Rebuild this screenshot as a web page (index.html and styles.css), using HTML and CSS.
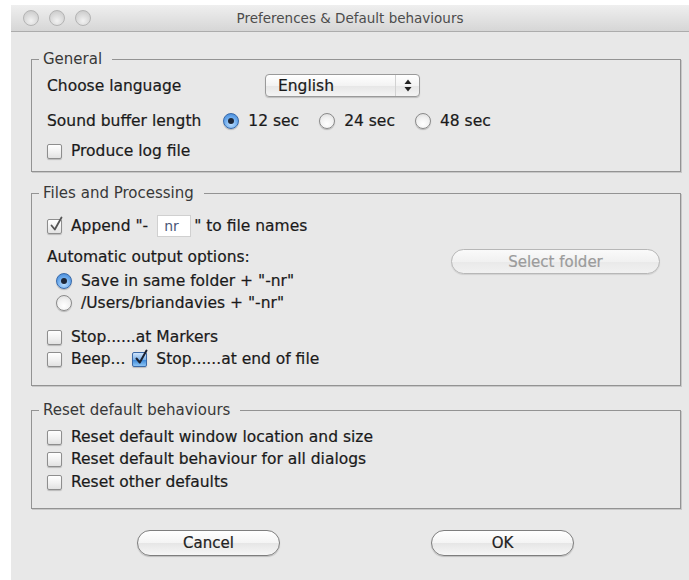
FILE: index.html
```html
<!DOCTYPE html>
<html lang="en">
<head>
<meta charset="utf-8">
<title>Preferences &amp; Default behaviours</title>
<link rel="stylesheet" href="styles.css">
</head>
<body>
<div class="window">
  <div class="titlebar">
    <div class="lights"><span></span><span></span><span></span></div>
    <div class="title">Preferences &amp; Default behaviours</div>
  </div>

  <div class="content">
    <fieldset class="group group-general">
      <legend>General</legend>
      <div class="row row-lang">
        <span class="label label-lang">Choose language</span>
        <div class="popup">
          <span class="popup-value">English</span>
          <span class="popup-arrows">
            <svg width="8" height="13" viewBox="0 0 8 13"><path d="M4 0.5 L7.5 5 L0.5 5 Z" fill="#222"/><path d="M4 12.5 L7.5 8 L0.5 8 Z" fill="#222"/></svg>
          </span>
        </div>
      </div>
      <div class="row row-buffer">
        <span class="label label-buffer">Sound buffer length</span>
        <div class="radio-group">
          <span class="opt"><span class="radio on"></span>12 sec</span>
          <span class="opt"><span class="radio"></span>24 sec</span>
          <span class="opt"><span class="radio"></span>48 sec</span>
        </div>
      </div>
      <div class="row row-log">
        <span class="opt"><span class="check"></span>Produce log file</span>
      </div>
    </fieldset>

    <fieldset class="group group-files">
      <legend>Files and Processing</legend>
      <div class="row row-append">
        <span class="opt">
          <span class="check marked">
            <svg class="tick" width="16" height="18" viewBox="0 0 16 18"><path d="M3.5 10.5 L6.8 14.5 L13.5 2.5" fill="none" stroke="#555" stroke-width="1.8" stroke-linecap="round" stroke-linejoin="round"/></svg>
          </span>Append "-</span>
        <span class="field">nr</span>
        <span class="after-field">" to file names</span>
      </div>
      <div class="auto-block">
        <div class="auto-options">
          <div class="row row-auto">Automatic output options:</div>
          <div class="row row-radio first"><span class="opt"><span class="radio on"></span>Save in same folder + "-nr"</span></div>
          <div class="row row-radio"><span class="opt"><span class="radio"></span>/Users/briandavies + "-nr"</span></div>
        </div>
        <div class="pill pill-disabled select-folder">Select folder</div>
      </div>
      <div class="row row-markers">
        <span class="opt"><span class="check"></span>Stop......at Markers</span>
      </div>
      <div class="row row-beep">
        <span class="opt"><span class="check"></span>Beep...</span>
        <span class="opt"><span class="check blue">
          <svg class="tick" width="16" height="18" viewBox="0 0 16 18"><path d="M3.5 10.5 L6.8 14.5 L13.5 2.5" fill="none" stroke="#1b2130" stroke-width="2" stroke-linecap="round" stroke-linejoin="round"/></svg>
        </span>Stop......at end of file</span>
      </div>
    </fieldset>

    <fieldset class="group group-reset">
      <legend>Reset default behaviours</legend>
      <div class="row row-reset first"><span class="opt"><span class="check"></span>Reset default window location and size</span></div>
      <div class="row row-reset"><span class="opt"><span class="check"></span>Reset default behaviour for all dialogs</span></div>
      <div class="row row-reset"><span class="opt"><span class="check"></span>Reset other defaults</span></div>
    </fieldset>

    <div class="buttons">
      <div class="pill">Cancel</div>
      <div class="pill">OK</div>
    </div>
  </div>
</div>
</body>
</html>
```

FILE: styles.css
```css
html, body {
  margin: 0;
  padding: 0;
  background: #ffffff;
}

body {
  font-family: "DejaVu Sans", "Liberation Sans", sans-serif;
  font-size: 15.5px;
  color: #1a1a1a;
  -webkit-text-stroke: 0.2px currentColor;
}

/* ---------- window chrome ---------- */
.window {
  margin: 5px 0 0 11px;
  width: 678px;
  height: 575px;
  background: #e8e8e8;
  display: flex;
  flex-direction: column;
}

.titlebar {
  height: 26px;
  border-bottom: 1px solid #acacac;
  background: linear-gradient(#efefef, #d6d6d6);
  display: grid;
  grid-template-columns: 1fr auto 1fr;
  align-items: center;
}

.lights {
  display: flex;
  gap: 10px;
  padding-left: 12px;
}

.lights span {
  width: 14px;
  height: 14px;
  border-radius: 50%;
  border: 1px solid #b4b4b4;
  background: radial-gradient(circle at 50% 70%, #f2f2f2, #d2d2d2 70%, #c4c4c4);
}

.title {
  font-size: 13.5px;
  color: #4c4c4c;
  white-space: nowrap;
  -webkit-text-stroke: 0;
}

/* ---------- body ---------- */
.content {
  padding: 0 8px 0 20px;
  display: flex;
  flex-direction: column;
}

.group {
  margin: 0;
  padding: 0 10px 0 15px;
  border: 1px solid #939393;
  box-shadow: 1px 1px 0 #c8c8c8;
  min-width: 0;
}

.group legend {
  font-size: 15px;
  line-height: 18px;
  color: #383838;
  padding: 0 10px 0 4px;
  margin-left: -8px;
  -webkit-text-stroke: 0;
}

.group-general { margin-top: 18px; padding-top: 6px; padding-bottom: 10px; }
.group-files   { margin-top: 12px; padding-top: 13px; padding-bottom: 16px; }
.group-reset   { margin-top: 15px; padding-top: 8px;  padding-bottom: 16px; }

.row {
  display: flex;
  align-items: center;
  height: 20px;
  white-space: nowrap;
}

.opt {
  display: inline-flex;
  align-items: center;
  gap: 9px;
}

/* general */
.row-lang { height: 23px; }
.label-lang { width: 218px; }
.row-buffer { margin-top: 14px; }
.label-buffer { margin-right: 22px; }
.radio-group { display: flex; gap: 20px; }
.row-log { margin-top: 10px; }

.popup {
  width: 153px;
  height: 21px;
  border: 1px solid #9a9a9a;
  border-radius: 4px;
  background: linear-gradient(#ffffff, #f3f3f3 50%, #e6e6e6 51%, #f4f4f4);
  box-shadow: 0 1px 1px rgba(0, 0, 0, 0.18);
  display: flex;
  align-items: center;
}

.popup-value {
  flex: 1;
  padding-left: 12px;
}

.popup-arrows {
  width: 23px;
  height: 100%;
  border-left: 1px solid #d2d2d2;
  display: flex;
  align-items: center;
  justify-content: center;
}

/* files */
.row-append { height: 22px; }
.field {
  width: 26px;
  height: 20px;
  margin-left: 9px;
  padding-left: 6px;
  background: #ffffff;
  border: 1px solid #d0d0d0;
  color: #4a5878;
  font-size: 14px;
  line-height: 20px;
  -webkit-text-stroke: 0;
}
.after-field { margin-left: 3px; }

.auto-block {
  display: grid;
  grid-template-columns: 404px 209px;
  margin-top: 10px;
}

.row-radio { padding-left: 9px; }
.row-radio.first { margin-top: 4px; }
.row-radio + .row-radio { margin-top: 2px; }

.row-markers { margin-top: 14px; }
.row-beep { margin-top: 2px; gap: 7px; }

/* reset */
.row-reset + .row-reset { margin-top: 2px; }
.row-reset:last-child { margin-top: 3px; }

/* ---------- controls ---------- */
.check {
  position: relative;
  width: 13px;
  height: 13px;
  border: 1px solid #8e8e8e;
  border-radius: 2px;
  background: linear-gradient(#ffffff, #f1f1f1 55%, #e2e2e2);
  box-shadow: 0 1px 1px rgba(0, 0, 0, 0.2);
  flex: none;
}

.check.blue {
  border-color: #3a68a6;
  background: linear-gradient(#cfe4fb, #7fb3ea 50%, #3f8ad9 55%, #8cc4f4);
}

.tick {
  position: absolute;
  left: 0;
  top: -5px;
}

.radio {
  position: relative;
  width: 14px;
  height: 14px;
  border: 1px solid #8a8a8a;
  border-radius: 50%;
  background: radial-gradient(circle at 50% 70%, #ffffff, #f0f0f0 55%, #d6d6d6);
  box-shadow: 0 1px 1px rgba(0, 0, 0, 0.22);
  flex: none;
}

.radio.on {
  border-color: #3769aa;
  background: radial-gradient(circle at 50% 70%, #bfe0ff, #6aa9ec 55%, #3a7fd2);
}

.radio.on::after {
  content: "";
  position: absolute;
  left: 4px;
  top: 4px;
  width: 6px;
  height: 6px;
  border-radius: 50%;
  background: #1d2738;
}

.pill {
  box-sizing: content-box;
  width: 141px;
  height: 24px;
  border: 1px solid #7e7e7e;
  border-radius: 13px;
  background: linear-gradient(#ffffff, #f4f4f4 50%, #e6e6e6 51%, #f6f6f6);
  box-shadow: 0 1px 1px rgba(0, 0, 0, 0.18);
  display: flex;
  align-items: center;
  justify-content: center;
  font-size: 15px;
  color: #222222;
}

.pill.pill-disabled {
  border-color: #b7b7b7;
  color: #9b9b9b;
  background: linear-gradient(#fafafa, #f1f1f1 50%, #e9e9e9 51%, #f1f1f1);
  box-shadow: 0 1px 1px rgba(0, 0, 0, 0.1);
}

.pill.select-folder {
  width: 207px;
  height: 23px;
  margin-top: 2px;
}

.buttons {
  display: flex;
  gap: 151px;
  padding-left: 106px;
  margin-top: 21px;
}
```
